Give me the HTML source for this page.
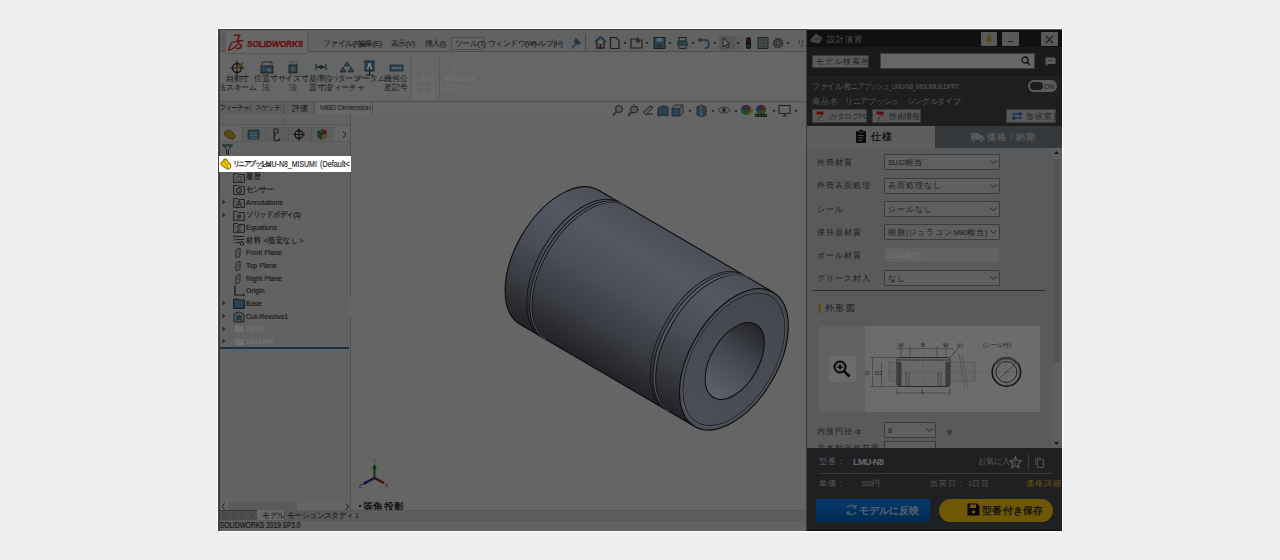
<!DOCTYPE html>
<html><head><meta charset="utf-8"><style>
*{box-sizing:border-box;margin:0;padding:0}
html,body{width:1280px;height:560px;overflow:hidden;background:#efefef;font-family:"Liberation Sans",sans-serif;}
.a{position:absolute}
.t{position:absolute;white-space:nowrap;line-height:1;}
.j{letter-spacing:0.14em}
.j0 .j{letter-spacing:0}
svg{position:absolute;overflow:visible}
</style></head><body>
<div class="a" style="left:217px;top:28px;width:846px;height:504px;background:#ffffff;"></div>
<div class="a" style="left:218px;top:29px;width:588px;height:502px;background:#666666;"></div>
<div class="a" style="left:218px;top:29px;width:844px;height:1px;background:#3a3a3a;"></div>
<div class="a" style="left:218px;top:29px;width:1px;height:502px;background:#4a4a4a;"></div>
<div class="a" style="left:219px;top:30px;width:587px;height:22px;background:#626262;"></div>
<div class="a" style="left:219px;top:51px;width:587px;height:1px;background:#4c4c4c;"></div>
<div class="a" style="left:225px;top:31px;width:83px;height:23px;background:#686868;border:1px solid #575757;border-top:none;border-radius:0 0 2px 2px"></div>
<div class="a" style="left:220px;top:34px;width:5px;height:17px;background:#5c5c5c;"></div>
<div class="t" style="left:246.5px;top:40.2px;font-size:8.9px;color:#640e0e;font-weight:bold;font-style:italic;letter-spacing:0px;-webkit-text-stroke:0.35px #640e0e;transform:scaleX(0.92);transform-origin:left">SOLIDWORKS</div>
<svg style="left:224px;top:32px" width="24" height="22" viewBox="0 0 24 22"><path d="M10 3.3 H15.8 L13.2 9" fill="none" stroke="#640e0e" stroke-width="1.5"/><path d="M13.5 9.6 C10 9.6 7.8 10 7.2 11.5 L4.6 18 C9 17.2 12 15 13.2 12.2" fill="none" stroke="#640e0e" stroke-width="1.3"/><path d="M19.5 8.8 H15.5 C13.5 8.8 13.8 11.8 16.3 12.8 C18.5 13.8 17.5 16.3 14.5 16.4 H12.3" fill="none" stroke="#640e0e" stroke-width="1.5"/></svg>
<div class="a" style="left:451px;top:37px;width:33px;height:13px;background:#656565;border:1px solid #4e4e4e;"></div>
<div class="t j0" style="left:323px;top:40px;font-size:8px;color:#161616;letter-spacing:-0.6px">ファイル(F)</div>
<div class="t j0" style="left:358px;top:40px;font-size:8px;color:#161616;letter-spacing:-0.6px">編集(E)</div>
<div class="t j0" style="left:391px;top:40px;font-size:8px;color:#161616;letter-spacing:-0.6px">表示(V)</div>
<div class="t j0" style="left:425px;top:40px;font-size:8px;color:#161616;letter-spacing:-0.6px">挿入(I)</div>
<div class="t j0" style="left:455px;top:40px;font-size:8px;color:#161616;letter-spacing:-0.6px">ツール(T)</div>
<div class="t j0" style="left:488px;top:40px;font-size:8px;color:#161616;letter-spacing:-0.6px">ウィンドウ(W)</div>
<div class="t j0" style="left:531px;top:40px;font-size:8px;color:#161616;letter-spacing:-0.6px">ヘルプ(H)</div>
<svg style="left:571px;top:37px" width="10" height="12" viewBox="0 0 10 12"><path d="M1 11 L4.5 7 M3 4 L7 8 M5 2 L9 6 L7 7 L4 4 Z" stroke="#203848" stroke-width="1.6" fill="#203848"/></svg>
<div class="a" style="left:585px;top:34px;width:1px;height:17px;background:#4a4a4a;"></div>
<svg style="left:594px;top:36px" width="212" height="14" viewBox="0 0 212 14">
<path d="M1 6 L6.5 1 L12 6" fill="none" stroke="#1c3444" stroke-width="2"/>
<path d="M3 6 V12 H10 V6" fill="none" stroke="#1e1e1e" stroke-width="1.3"/>
<rect x="5.5" y="8" width="2" height="4" fill="#1e1e1e"/>
<path d="M16.5 1.5 H22 L25 4.5 V12.5 H16.5 Z" fill="none" stroke="#1e1e1e" stroke-width="1.2"/>
<path d="M29.5 6.3 L32.5 6.3 L31.0 8.3 Z" fill="#111"/>
<path d="M37 3 H42 L43 4 H48 V12 H37 Z" fill="none" stroke="#1e1e1e" stroke-width="1.2"/>
<path d="M44 1 V6 M42 4 L44 6.5 L46 4" fill="none" stroke="#1d3a14" stroke-width="1.5"/>
<path d="M51.5 6.3 L54.5 6.3 L53.0 8.3 Z" fill="#111"/>
<rect x="60" y="1.5" width="11" height="11" fill="#2a4454" stroke="#111" stroke-width="0.8"/>
<rect x="62.5" y="2" width="6" height="3.5" fill="#5a6a72"/>
<rect x="62.5" y="8" width="6" height="4" fill="#333"/>
<path d="M74.5 6.3 L77.5 6.3 L76.0 8.3 Z" fill="#111"/>
<rect x="83" y="5" width="11" height="5" fill="#2a4454"/>
<rect x="85" y="1.5" width="7" height="3.5" fill="none" stroke="#1e1e1e" stroke-width="1"/>
<rect x="85" y="9" width="7" height="3.5" fill="#5a5a5a" stroke="#1e1e1e" stroke-width="0.8"/>
<path d="M97.5 6.3 L100.5 6.3 L99.0 8.3 Z" fill="#111"/>
<path d="M106 4 H111 C114 4 115 6 115 8 C115 10 114 12 111 12" fill="none" stroke="#243e4c" stroke-width="2"/>
<path d="M103 4 L107 1 L107 7 Z" fill="#243e4c"/>
<path d="M119.5 6.3 L122.5 6.3 L121.0 8.3 Z" fill="#111"/>
<rect x="125" y="0" width="16" height="14" fill="#565656"/>
<rect x="141" y="0" width="7" height="14" fill="#5e5e5e"/>
<path d="M129 2 L129 11 L131.5 9 L133.5 12 L135 11 L133 8 L136 8 Z" fill="#6a6a6a" stroke="#1e1e1e" stroke-width="0.9"/>
<path d="M142.5 6.3 L145.5 6.3 L144.0 8.3 Z" fill="#111"/>
<rect x="152" y="1" width="5" height="12" rx="2.5" fill="#151515"/>
<circle cx="154.5" cy="4" r="1.3" fill="#5a0d0d"/><circle cx="154.5" cy="10" r="1.3" fill="#244a24"/>
<rect x="164" y="1.5" width="10" height="11" fill="#4a4a4a" stroke="#1e1e1e" stroke-width="0.9"/>
<path d="M166 4 H172 M166 7 H172 M166 10 H172" stroke="#243c48" stroke-width="1.2"/>
<circle cx="184" cy="7" r="4.6" fill="none" stroke="#222" stroke-width="1.3" stroke-dasharray="1.4 0.9"/><circle cx="184" cy="7" r="3.6" fill="none" stroke="#222" stroke-width="0.9"/>
<circle cx="184" cy="7" r="2" fill="none" stroke="#222" stroke-width="1"/>
<path d="M192.5 6.3 L195.5 6.3 L194.0 8.3 Z" fill="#111"/>
</svg>
<div class="t j0" style="left:797px;top:40px;font-size:8px;color:#161616;letter-spacing:-0.5px">リニ</div>
<div class="a" style="left:219px;top:101px;width:587px;height:1px;background:#505050;"></div>
<div class="t j0" style="left:197.5px;top:75.3px;width:80px;text-align:center;font-size:7.6px;color:#161616;letter-spacing:-0.3px">自動寸</div>
<div class="t j0" style="left:197.5px;top:83.8px;width:80px;text-align:center;font-size:7.6px;color:#161616;letter-spacing:-0.3px">法スキーム</div>
<div class="t j0" style="left:225.7px;top:75.3px;width:80px;text-align:center;font-size:7.6px;color:#161616;letter-spacing:-0.3px">位置寸</div>
<div class="t j0" style="left:225.7px;top:83.8px;width:80px;text-align:center;font-size:7.6px;color:#161616;letter-spacing:-0.3px">法</div>
<div class="t j0" style="left:253px;top:75.3px;width:80px;text-align:center;font-size:7.6px;color:#161616;letter-spacing:-0.3px">サイズ寸</div>
<div class="t j0" style="left:253px;top:83.8px;width:80px;text-align:center;font-size:7.6px;color:#161616;letter-spacing:-0.3px">法</div>
<div class="t j0" style="left:280.5px;top:75.3px;width:80px;text-align:center;font-size:7.6px;color:#161616;letter-spacing:-0.3px">基準位</div>
<div class="t j0" style="left:280.5px;top:83.8px;width:80px;text-align:center;font-size:7.6px;color:#161616;letter-spacing:-0.3px">置寸法</div>
<div class="t j0" style="left:305.3px;top:75.3px;width:80px;text-align:center;font-size:7.6px;color:#161616;letter-spacing:-0.3px">パターン</div>
<div class="t j0" style="left:305.3px;top:83.8px;width:80px;text-align:center;font-size:7.6px;color:#161616;letter-spacing:-0.3px">フィーチャ</div>
<div class="t j0" style="left:330px;top:75.3px;width:80px;text-align:center;font-size:7.6px;color:#161616;letter-spacing:-0.3px">データム</div>
<div class="t j0" style="left:356px;top:75.3px;width:80px;text-align:center;font-size:7.6px;color:#161616;letter-spacing:-0.3px">幾何公</div>
<div class="t j0" style="left:356px;top:83.8px;width:80px;text-align:center;font-size:7.6px;color:#161616;letter-spacing:-0.3px">差記号</div>
<div class="t j0" style="left:384px;top:75.3px;width:80px;text-align:center;font-size:7.6px;color:#747474;letter-spacing:-0.3px">公差の</div>
<div class="t j0" style="left:384px;top:83.8px;width:80px;text-align:center;font-size:7.6px;color:#747474;letter-spacing:-0.3px">ステータス</div>
<div class="t j0" style="left:384px;top:92.3px;width:80px;text-align:center;font-size:7.6px;color:#747474;letter-spacing:-0.3px">を表示</div>
<div class="t j0" style="left:419px;top:75.3px;width:80px;text-align:center;font-size:7.6px;color:#747474;letter-spacing:-0.3px">TolAnalyst</div>
<div class="t j0" style="left:419px;top:83.8px;width:80px;text-align:center;font-size:7.6px;color:#747474;letter-spacing:-0.3px">スタディ</div>
<div class="a" style="left:410px;top:56px;width:1px;height:43px;background:#5a5a5a;"></div>
<div class="a" style="left:439px;top:56px;width:1px;height:43px;background:#5a5a5a;"></div>
<svg style="left:226px;top:60px" width="260" height="16" viewBox="0 0 260 16">
<circle cx="11" cy="8" r="4.5" fill="none" stroke="#161616" stroke-width="1.4"/>
<path d="M11 1 V15 M4 8 H18" stroke="#161616" stroke-width="1.2"/>
<path d="M10 9 L16 2 L18 3 L12 10 Z" fill="#5e3e16"/>
<rect x="35" y="6" width="12" height="7" fill="#2a4454" stroke="#151515" stroke-width="0.8"/>
<path d="M36 5 V2 H46 V5" fill="none" stroke="#222" stroke-width="0.9"/>
<circle cx="43" cy="10" r="1.8" fill="#5a5a5a"/>
<rect x="63" y="5" width="8" height="8" fill="#2a4454" stroke="#151515" stroke-width="0.8"/>
<circle cx="67" cy="9" r="1.8" fill="#5a5a5a"/>
<path d="M64 2 H72" stroke="#222" stroke-width="0.9" stroke-dasharray="1 1"/>
<rect x="89" y="4" width="2" height="6" fill="#2a4454"/><rect x="99" y="4" width="2" height="6" fill="#2a4454"/>
<path d="M91 7 H99" stroke="#151515" stroke-width="1.2"/><circle cx="95" cy="7" r="1.5" fill="none" stroke="#151515"/>
<path d="M121 2 L118 6 H124 Z M117 7 L114 12 H120 Z M125 7 L122 12 H128 Z" fill="#2a4454" stroke="#151515" stroke-width="0.6"/>
<rect x="139" y="1" width="9" height="10" fill="#2a4454" stroke="#151515" stroke-width="0.8"/>
<path d="M141.5 9 L143.5 3 L145.5 9" fill="none" stroke="#bbb" stroke-width="0.8"/>
<path d="M143.5 11 V15 M140 15 H147" stroke="#151515" stroke-width="1"/>
<rect x="164" y="5" width="13" height="6" fill="#2a4454" stroke="#151515" stroke-width="0.6"/>
<path d="M166 8 H175" stroke="#8a9aa2" stroke-width="1" stroke-dasharray="1.5 1"/>
<path d="M193 2 V7 M190.5 4.5 H195.5 M190.5 8.5 H195.5" stroke="#6e6e6e" stroke-width="1"/>
<circle cx="198" cy="10" r="2.2" fill="none" stroke="#6e6e6e" stroke-width="0.8"/>
<rect x="228" y="1" width="8" height="11" fill="none" stroke="#6e6e6e" stroke-width="0.9"/>
<path d="M230 3 V10 M233 3 L231 6.5 L233 10" stroke="#6e6e6e" stroke-width="0.9" fill="none"/>
</svg>
<div class="a" style="left:219px;top:102px;width:587px;height:12px;background:#666666;"></div>
<div class="a" style="left:219px;top:101px;width:32px;height:14px;background:#5e5e5e;border-top:1px solid #525252;border-right:1px solid #4e4e4e;border-bottom:1px solid #555"></div>
<div class="t j0" style="left:219px;top:105px;width:32px;text-align:center;font-size:6.6px;color:#141414;letter-spacing:-0.9px">フィーチャー</div>
<div class="a" style="left:251px;top:101px;width:33px;height:14px;background:#5e5e5e;border-top:1px solid #525252;border-right:1px solid #4e4e4e;border-bottom:1px solid #555"></div>
<div class="t j0" style="left:251px;top:105px;width:33px;text-align:center;font-size:6.6px;color:#141414;letter-spacing:-0.9px">スケッチ</div>
<div class="a" style="left:284px;top:101px;width:31px;height:14px;background:#5e5e5e;border-top:1px solid #525252;border-right:1px solid #4e4e4e;border-bottom:1px solid #555"></div>
<div class="t j0" style="left:284px;top:105px;width:31px;text-align:center;font-size:8px;color:#141414;letter-spacing:0px">評価</div>
<div class="a" style="left:315px;top:101px;width:58px;height:14px;background:#686868;border-top:1px solid #525252;border-right:1px solid #4e4e4e;"></div>
<div class="t" style="left:320px;top:104.2px;font-size:7.8px;color:#1e1e1e;letter-spacing:-0.45px">MBD Dimension</div>
<div class="a" style="left:219px;top:114px;width:131px;height:396px;background:#626262;"></div>
<div class="a" style="left:219px;top:114px;width:131px;height:11px;background:#636363;border-bottom:1px solid #575757"></div>
<svg style="left:281px;top:117.5px" width="6" height="6" viewBox="0 0 6 6"><path d="M3 0.5 L5.5 3 L3 5.5 L0.5 3 Z" fill="none" stroke="#4a4a4a" stroke-width="0.8"/></svg>
<div class="a" style="left:219px;top:127px;width:131px;height:15px;background:#666666;"></div>
<div class="a" style="left:242px;top:127px;width:23px;height:15px;background:#5e5e5e;border-left:1px solid #555;border-top:1px solid #5a5a5a"></div>
<div class="a" style="left:265px;top:127px;width:23px;height:15px;background:#5e5e5e;border-left:1px solid #555;border-top:1px solid #5a5a5a"></div>
<div class="a" style="left:288px;top:127px;width:23px;height:15px;background:#5e5e5e;border-left:1px solid #555;border-top:1px solid #5a5a5a"></div>
<div class="a" style="left:311px;top:127px;width:23px;height:15px;background:#5e5e5e;border-left:1px solid #555;border-top:1px solid #5a5a5a"></div>
<div class="a" style="left:219px;top:141px;width:131px;height:1px;background:#5a5a5a;"></div>
<svg style="left:219px;top:127px" width="131" height="15" viewBox="0 0 131 15">
<path d="M7 4 C9 2 12 3 13 5 L15 7 C17 9 16 12 13 12 C10 12 7 10 6 8 C5 6 5.5 5 7 4Z" fill="#5e4a10" stroke="#2a2208" stroke-width="0.8"/>
<rect x="29" y="3" width="11" height="9" rx="1" fill="#2a4454" stroke="#1a1a1a" stroke-width="0.6"/>
<path d="M31 6 H38 M31 8.5 H38 M31 11 H38" stroke="#5a6a70" stroke-width="0.8"/>
<path d="M55 2 V13 M55 2 H59 V6 H55 M57 8 A3 3 0 1 0 61 11" fill="none" stroke="#1e1e1e" stroke-width="1.1"/>
<circle cx="80" cy="7.5" r="4" fill="none" stroke="#121212" stroke-width="1.4"/>
<path d="M80 1.5 V13.5 M74 7.5 H86" stroke="#121212" stroke-width="1.2"/>
<circle cx="103" cy="7.5" r="5" fill="#244a24"/>
<path d="M103 7.5 L103 2.5 A5 5 0 0 1 108 7.5 Z" fill="#5a1c1c"/>
<path d="M103 7.5 L108 7.5 A5 5 0 0 1 103 12.5 Z" fill="#5e5416"/>
<path d="M103 7.5 L103 12.5 A5 5 0 0 1 98 7.5 Z" fill="#1e2e56"/>
<path d="M103 7.5 L98 4 M103 7.5 L107 3" stroke="#111" stroke-width="1"/>
<path d="M124 4 L127 7.5 L124 11" fill="none" stroke="#1a1a1a" stroke-width="1"/>
</svg>
<svg style="left:222px;top:144px" width="11" height="11" viewBox="0 0 11 11"><path d="M0.5 1 H10.5 L6.5 5.5 V10.5 L4.5 9.5 V5.5 Z" fill="none" stroke="#1a1a1a" stroke-width="1"/><path d="M0.5 1 H10.5 L9 2.7 H2 Z" fill="#243e4c"/></svg>
<div class="a" style="left:350px;top:114px;width:1px;height:396px;background:#505050;"></div>
<svg style="left:233px;top:171.5px" width="12" height="11" viewBox="0 0 12 11"><path d="M0.6 1.5 H4.5 L5.5 2.5 H11.4 V10.4 H0.6 Z" fill="#5e5e5e" stroke="#1c1c1c" stroke-width="0.9"/><circle cx="6" cy="6.5" r="2.5" fill="none" stroke="#243c48" stroke-width="1"/></svg>
<div class="t" style="left:246px;top:173.3px;font-size:8.1px;color:#161616;letter-spacing:0px;transform:scaleX(0.86);transform-origin:left;-webkit-text-stroke:0.15px #161616"><span class="j">履歴</span></div>
<svg style="left:233px;top:184.1px" width="12" height="11" viewBox="0 0 12 11"><path d="M0.6 1.5 H4.5 L5.5 2.5 H11.4 V10.4 H0.6 Z" fill="#5e5e5e" stroke="#1c1c1c" stroke-width="0.9"/><circle cx="6" cy="6.5" r="2.5" fill="none" stroke="#1a1a1a" stroke-width="1"/><path d="M6 6.5 L8 8" stroke="#5a0d0d" stroke-width="1"/></svg>
<div class="t j0" style="left:246px;top:185.9px;font-size:8.1px;color:#161616;letter-spacing:-0.9px;transform:scaleX(0.95);transform-origin:left;-webkit-text-stroke:0.15px #161616">センサー</div>
<svg style="left:222px;top:199.2px" width="4" height="6" viewBox="0 0 4 6"><path d="M0.5 0.5 L3.5 3 L0.5 5.5 Z" fill="#2a2a2a"/></svg>
<svg style="left:233px;top:196.7px" width="12" height="11" viewBox="0 0 12 11"><path d="M0.6 1.5 H4.5 L5.5 2.5 H11.4 V10.4 H0.6 Z" fill="#5e5e5e" stroke="#1c1c1c" stroke-width="0.9"/><path d="M3.5 9.5 L6 3.5 L8.5 9.5 M4.5 7.5 H7.5" fill="none" stroke="#1a1a1a" stroke-width="0.9"/></svg>
<div class="t" style="left:246px;top:198.5px;font-size:8.1px;color:#161616;letter-spacing:0px;transform:scaleX(0.86);transform-origin:left;-webkit-text-stroke:0.15px #161616">Annotations</div>
<svg style="left:222px;top:212px" width="4" height="6" viewBox="0 0 4 6"><path d="M0.5 0.5 L3.5 3 L0.5 5.5 Z" fill="#2a2a2a"/></svg>
<svg style="left:233px;top:209.5px" width="12" height="11" viewBox="0 0 12 11"><path d="M0.6 1.5 H4.5 L5.5 2.5 H11.4 V10.4 H0.6 Z" fill="#5e5e5e" stroke="#1c1c1c" stroke-width="0.9"/><circle cx="6" cy="6.5" r="2.3" fill="#243c48"/></svg>
<div class="t j0" style="left:246px;top:211.3px;font-size:8.1px;color:#161616;letter-spacing:-0.9px;transform:scaleX(0.95);transform-origin:left;-webkit-text-stroke:0.15px #161616">ソリッドボディ(1)</div>
<svg style="left:233px;top:221.9px" width="12" height="11" viewBox="0 0 12 11"><path d="M0.6 1.5 H4.5 L5.5 2.5 H11.4 V10.4 H0.6 Z" fill="#5e5e5e" stroke="#1c1c1c" stroke-width="0.9"/><path d="M8 4 H4 L6 6.5 L4 9 H8" fill="none" stroke="#1a1a1a" stroke-width="0.9"/></svg>
<div class="t" style="left:246px;top:223.70000000000002px;font-size:8.1px;color:#161616;letter-spacing:0px;transform:scaleX(0.86);transform-origin:left;-webkit-text-stroke:0.15px #161616">Equations</div>
<svg style="left:233px;top:234.8px" width="12" height="11" viewBox="0 0 12 11"><path d="M3 1.5 H11 M3 4.5 H11 M3 7.5 H7" stroke="#1a1a1a" stroke-width="1"/><circle cx="1.5" cy="1.5" r="1" fill="none" stroke="#1a1a1a" stroke-width="0.7"/><circle cx="1.5" cy="4.5" r="1" fill="#243c48"/><circle cx="1.5" cy="7.5" r="1" fill="#5a4a0a"/><circle cx="9" cy="8.5" r="1.8" fill="none" stroke="#111" stroke-width="1"/></svg>
<div class="t" style="left:246px;top:236.60000000000002px;font-size:8.1px;color:#161616;letter-spacing:0px;transform:scaleX(0.86);transform-origin:left;-webkit-text-stroke:0.15px #161616"><span class="j">材料</span> &lt;<span class="j">指定なし</span>&gt;</div>
<svg style="left:233px;top:247.3px" width="12" height="12" viewBox="0 0 12 12"><path d="M3 3 L7 1 V9 L3 11 Z" fill="none" stroke="#1e1e1e" stroke-width="0.9"/><path d="M5 4 V8" stroke="#1e1e1e" stroke-width="0.8" stroke-dasharray="1 1"/></svg>
<div class="t" style="left:246px;top:249.10000000000002px;font-size:8.1px;color:#161616;letter-spacing:0px;transform:scaleX(0.86);transform-origin:left;-webkit-text-stroke:0.15px #161616">Front Plane</div>
<svg style="left:233px;top:260.1px" width="12" height="12" viewBox="0 0 12 12"><path d="M3 3 L7 1 V9 L3 11 Z" fill="none" stroke="#1e1e1e" stroke-width="0.9"/><path d="M5 4 V8" stroke="#1e1e1e" stroke-width="0.8" stroke-dasharray="1 1"/></svg>
<div class="t" style="left:246px;top:261.90000000000003px;font-size:8.1px;color:#161616;letter-spacing:0px;transform:scaleX(0.86);transform-origin:left;-webkit-text-stroke:0.15px #161616">Top Plane</div>
<svg style="left:233px;top:272.7px" width="12" height="12" viewBox="0 0 12 12"><path d="M3 3 L7 1 V9 L3 11 Z" fill="none" stroke="#1e1e1e" stroke-width="0.9"/><path d="M5 4 V8" stroke="#1e1e1e" stroke-width="0.8" stroke-dasharray="1 1"/></svg>
<div class="t" style="left:246px;top:274.5px;font-size:8.1px;color:#161616;letter-spacing:0px;transform:scaleX(0.86);transform-origin:left;-webkit-text-stroke:0.15px #161616">Right Plane</div>
<svg style="left:233px;top:285.2px" width="12" height="12" viewBox="0 0 12 12"><path d="M2 0.5 V10 H11" fill="none" stroke="#111" stroke-width="1.2"/><path d="M10 8.5 L12 10 L10 11.5 Z" fill="#111"/></svg>
<div class="t" style="left:246px;top:287.0px;font-size:8.1px;color:#161616;letter-spacing:0px;transform:scaleX(0.86);transform-origin:left;-webkit-text-stroke:0.15px #161616">Origin</div>
<svg style="left:222px;top:300.4px" width="4" height="6" viewBox="0 0 4 6"><path d="M0.5 0.5 L3.5 3 L0.5 5.5 Z" fill="#2a2a2a"/></svg>
<svg style="left:233px;top:297.9px" width="12" height="11" viewBox="0 0 12 11"><path d="M0.6 1 H4.5 L5.5 2 H11.4 V10.4 H0.6 Z" fill="#2a4454" stroke="#111" stroke-width="0.9"/></svg>
<div class="t" style="left:246px;top:299.7px;font-size:8.1px;color:#161616;letter-spacing:0px;transform:scaleX(0.86);transform-origin:left;-webkit-text-stroke:0.15px #161616">Base</div>
<svg style="left:222px;top:313.2px" width="4" height="6" viewBox="0 0 4 6"><path d="M0.5 0.5 L3.5 3 L0.5 5.5 Z" fill="#2a2a2a"/></svg>
<svg style="left:233px;top:310.7px" width="12" height="12" viewBox="0 0 12 12"><path d="M1 3 L6 1 L11 3 V11 H1 Z" fill="#5a5a5a" stroke="#1a1a1a" stroke-width="0.9"/><path d="M3 11 V5 L6 3.5 L9 5 V11 L6 8.5 Z" fill="#243c48"/></svg>
<div class="t" style="left:246px;top:312.5px;font-size:8.1px;color:#161616;letter-spacing:0px;transform:scaleX(0.86);transform-origin:left;-webkit-text-stroke:0.15px #161616">Cut-Revolve1</div>
<svg style="left:222px;top:325.6px" width="4" height="6" viewBox="0 0 4 6"><path d="M0.5 0.5 L3.5 3 L0.5 5.5 Z" fill="#2a2a2a"/></svg>
<svg style="left:233px;top:323.1px" width="12" height="11" viewBox="0 0 12 11"><path d="M0.6 1.5 H4.5 L5.5 2.5 H11.4 V10.4 H0.6 Z" fill="#6e6e6e" stroke="#5a5a5a" stroke-width="0.9"/></svg>
<div class="t" style="left:246px;top:324.90000000000003px;font-size:8.1px;color:#777777;letter-spacing:0px;transform:scaleX(0.86);transform-origin:left;-webkit-text-stroke:0.15px #777777">LMUT</div>
<svg style="left:222px;top:338.3px" width="4" height="6" viewBox="0 0 4 6"><path d="M0.5 0.5 L3.5 3 L0.5 5.5 Z" fill="#2a2a2a"/></svg>
<svg style="left:233px;top:335.8px" width="12" height="11" viewBox="0 0 12 11"><path d="M0.6 1.5 H4.5 L5.5 2.5 H11.4 V10.4 H0.6 Z" fill="#6e6e6e" stroke="#5a5a5a" stroke-width="0.9"/></svg>
<div class="t" style="left:246px;top:337.6px;font-size:8.1px;color:#777777;letter-spacing:0px;transform:scaleX(0.86);transform-origin:left;-webkit-text-stroke:0.15px #777777">LMU-MX</div>
<div class="a" style="left:219px;top:347px;width:130px;height:2px;background:#17354a;"></div>
<div class="a" style="left:350px;top:295px;width:7px;height:22px;background:#666666;border:1px solid #4e4e4e;border-left:none"></div>
<svg style="left:351px;top:303px" width="4" height="6" viewBox="0 0 4 6"><path d="M2 0.5 L3.5 3 L2 5.5 L0.5 3Z" fill="none" stroke="#4a4a4a" stroke-width="0.7"/></svg>
<div class="a" style="left:219px;top:502px;width:130px;height:8px;background:#666666;"></div>
<div class="a" style="left:228px;top:502px;width:69px;height:8px;background:#5a5a5a;"></div>
<svg style="left:221px;top:503px" width="130" height="7" viewBox="0 0 130 7"><path d="M3.5 0.5 L1 3.5 L3.5 6.5" fill="none" stroke="#111" stroke-width="1"/><path d="M125 0.5 L127.5 3.5 L125 6.5" fill="none" stroke="#111" stroke-width="1"/></svg>
<div class="a" style="left:351px;top:115px;width:455px;height:395px;background:#656565;"></div>
<svg style="left:612px;top:104px" width="190" height="13" viewBox="0 0 190 13">
<circle cx="7" cy="5" r="3.5" fill="#5a5a5a" stroke="#1e1e1e" stroke-width="1"/><path d="M4.5 7.5 L1 11.5" stroke="#243c48" stroke-width="2"/>
<circle cx="22" cy="5.5" r="3.5" fill="#5a5a5a" stroke="#1e1e1e" stroke-width="1"/><path d="M19.5 8 L16 12" stroke="#243c48" stroke-width="2"/><path d="M22 0 V1.5 M26.5 2 L25.5 3 M27 6 H25.5" stroke="#1e1e1e" stroke-width="0.8"/>
<path d="M31 8 L38 2 L41 3 L34 11 Z" fill="#5a5a5a" stroke="#1e1e1e" stroke-width="0.9"/><path d="M35 10 H41" stroke="#243c48" stroke-width="1.5"/>
<path d="M46 4 L51 2 V11 L46 12 Z" fill="#2a4454" stroke="#1e1e1e" stroke-width="0.8"/><path d="M51 2 L56 3 V12 L51 11" fill="#2a4454" stroke="#1e1e1e" stroke-width="0.8"/>
<path d="M60 4 H68 V12 H60 Z" fill="#2a4454" stroke="#1e1e1e" stroke-width="0.8"/><path d="M60 4 L63 1 H71 L68 4 M71 1 V9 L68 12" fill="#5e5e5e" stroke="#1e1e1e" stroke-width="0.8"/>
<path d="M76.5 6.3 L79.5 6.3 L78.0 8.3 Z" fill="#111"/>
<path d="M85 3 L89 1 L94 3 V11 L89 13 L85 11 Z" fill="#2a4454" stroke="#1e1e1e" stroke-width="0.8"/><path d="M89 1 V13" stroke="#6a6a6a" stroke-width="0.8"/>
<path d="M99.5 6.3 L102.5 6.3 L101.0 8.3 Z" fill="#111"/>
<path d="M106 6 C109 2 116 2 118 6 C116 10 109 10 106 6 Z" fill="none" stroke="#2a2a2a" stroke-width="0.9"/><circle cx="112" cy="6" r="2" fill="#2a2a2a"/>
<path d="M122.5 6.3 L125.5 6.3 L124.0 8.3 Z" fill="#111"/>
<circle cx="134" cy="6" r="5" fill="#244a24"/><path d="M134 6 L129 6 A5 5 0 0 1 134 1 Z" fill="#1e2e56"/><path d="M134 6 L134 1 A5 5 0 0 1 139 6 Z" fill="#5a1c1c"/><path d="M136 9 L141 5 L142 6 L137 11 Z" fill="#5e5416"/>
<circle cx="149" cy="6" r="5" fill="#244a24"/><path d="M149 6 L144 6 A5 5 0 0 1 149 1 Z" fill="#1e2e56"/><path d="M149 6 L149 1 A5 5 0 0 1 154 6 Z" fill="#5a1c1c"/><path d="M143 10 H155 V13 H143 Z" fill="#1a1a1a"/><path d="M144 11.5 H154" stroke="#555" stroke-dasharray="1.5 1.5"/>
<path d="M160.5 6.3 L163.5 6.3 L162.0 8.3 Z" fill="#111"/>
<rect x="167" y="1.5" width="11" height="8" fill="none" stroke="#1e1e1e" stroke-width="1"/><path d="M172.5 9.5 V12 M170 12 H175" stroke="#1e1e1e" stroke-width="1"/>
<path d="M182.5 6.3 L185.5 6.3 L184.0 8.3 Z" fill="#111"/>
</svg>
<svg style="left:358px;top:457px" width="34" height="32" viewBox="0 0 34 32">
<path d="M16.5 21 V9" stroke="#0e3210" stroke-width="1.8"/><path d="M14.2 11.5 L16.5 7 L18.8 11.5 Z" fill="#0e3210"/>
<path d="M16.5 21 L6 26.5" stroke="#0e1644" stroke-width="2.2"/><path d="M3.5 28 L8 23.8 L9.2 26.8 Z" fill="#0e1644"/>
<path d="M16.5 21 L26 26" stroke="#420c0c" stroke-width="2.2"/>
<text x="14.5" y="6" font-size="6" fill="#244a24" font-family="Liberation Sans">Y</text>
<text x="0.5" y="31" font-size="6" fill="#1a1f5a" font-family="Liberation Sans">Z</text>
<text x="26.5" y="30" font-size="6" fill="#5a1010" font-family="Liberation Sans">X</text>
</svg>
<div class="a" style="left:359px;top:505px;width:2px;height:2px;background:#111;"></div>
<div class="t j0" style="left:362.5px;top:501.5px;font-size:10px;color:#141414;font-weight:bold;letter-spacing:0.6px">等角投影</div>
<div class="a" style="left:219px;top:510px;width:587px;height:10px;background:#5e5e5e;border-top:1px solid #555"></div>
<div class="a" style="left:219px;top:510px;width:38px;height:10px;background:#4e4e4e;border-top:1px solid #333"></div>
<svg style="left:221px;top:511px" width="34" height="9" viewBox="0 0 34 9"><path d="M2 1.5 V7.5 M6 1.5 L3 4.5 L6 7.5 M14 1.5 L11 4.5 L14 7.5 M20 1.5 L23 4.5 L20 7.5 M28 1.5 L31 4.5 L28 7.5 M32 1.5 V7.5" fill="none" stroke="#404040" stroke-width="1"/></svg>
<div class="a" style="left:257px;top:510px;width:27px;height:10px;background:#686868;"></div>
<div class="t j0" style="left:262px;top:512px;font-size:7.5px;color:#141414;letter-spacing:-0.3px">モデル</div>
<div class="a" style="left:284px;top:510px;width:58px;height:10px;background:#5a5a5a;border-left:1px solid #4a4a4a;border-right:1px solid #4a4a4a"></div>
<div class="t j0" style="left:287px;top:512px;font-size:7.5px;color:#141414;letter-spacing:-0.6px">モーションスタディ 1</div>
<div class="a" style="left:219px;top:520px;width:587px;height:11px;background:#616161;border-top:1px solid #585858"></div>
<div class="t" style="left:219.5px;top:522.2px;font-size:8.2px;color:#121212;letter-spacing:0px;transform:scaleX(0.8);transform-origin:left;-webkit-text-stroke:0.15px #121212">SOLIDWORKS 2019 SP3.0</div>
<svg style="left:0;top:0" width="1280" height="560" viewBox="0 0 1280 560"><defs>
<linearGradient id="bodyg" x1="0" y1="-1" x2="0" y2="1" gradientUnits="objectBoundingBox">
</linearGradient>
<linearGradient id="bg2" gradientUnits="userSpaceOnUse" x1="0" y1="-78" x2="0" y2="78">
<stop offset="0" stop-color="#4c4e58"/><stop offset="0.22" stop-color="#555762"/><stop offset="0.5" stop-color="#4b4d57"/><stop offset="0.75" stop-color="#3a3c43"/><stop offset="0.9" stop-color="#2b2c31"/><stop offset="1" stop-color="#222327"/>
</linearGradient>
<linearGradient id="faceg" gradientUnits="userSpaceOnUse" x1="0" y1="-78" x2="0" y2="78">
<stop offset="0" stop-color="#45474f"/><stop offset="1" stop-color="#4c4e57"/>
</linearGradient>
<linearGradient id="holeg" gradientUnits="userSpaceOnUse" x1="205" y1="-40" x2="196" y2="40">
<stop offset="0" stop-color="#25262b"/><stop offset="0.45" stop-color="#454750"/><stop offset="1" stop-color="#5d5f6a"/>
</linearGradient>
</defs><g transform="translate(559.5,257.4) rotate(30.3)"><path d="M0 -77.7 A43.66740000000001 77.7 0 0 0 0 77.7 L202 77.7 L202 -77.7 Z" fill="url(#bg2)" stroke="#0c0c0e" stroke-width="1.1"/><path d="M25.00 -77.70 A43.67 77.70 0 0 0 25.00 77.70" fill="none" stroke="#141417" stroke-width="0.9"/><path d="M28.50 -77.70 A43.67 77.70 0 0 0 28.50 77.70" fill="none" stroke="#141417" stroke-width="0.9"/><path d="M31.00 -77.70 A43.67 77.70 0 0 0 31.00 77.70" fill="none" stroke="#141417" stroke-width="0.9"/><path d="M29.75 -77.70 A43.67 77.70 0 0 0 29.75 77.70" fill="none" stroke="#6a6c76" stroke-width="0.6"/><path d="M168.00 -77.70 A43.67 77.70 0 0 0 168.00 77.70" fill="none" stroke="#141417" stroke-width="0.9"/><path d="M171.00 -77.70 A43.67 77.70 0 0 0 171.00 77.70" fill="none" stroke="#141417" stroke-width="0.9"/><path d="M174.50 -77.70 A43.67 77.70 0 0 0 174.50 77.70" fill="none" stroke="#141417" stroke-width="0.9"/><path d="M172.75 -77.70 A43.67 77.70 0 0 0 172.75 77.70" fill="none" stroke="#6a6c76" stroke-width="0.6"/><ellipse cx="202" cy="0" rx="43.66740000000001" ry="77.7" fill="url(#faceg)" stroke="#0c0c0e" stroke-width="1.1"/><ellipse cx="202" cy="0" rx="41.05" ry="73.04" fill="none" stroke="#16171a" stroke-width="0.8"/><ellipse cx="202" cy="0" rx="41.70" ry="74.20" fill="none" stroke="#5e606a" stroke-width="0.5"/><ellipse cx="203.5" cy="1" rx="23.77" ry="42.3" fill="url(#holeg)" stroke="#0c0c0e" stroke-width="1"/></g></svg>
<div class="a" style="left:806px;top:29px;width:256px;height:502px;background:#595a5c;"></div>
<div class="a" style="left:806px;top:29px;width:1px;height:502px;background:#3a3a3a;"></div>
<div class="a" style="left:807px;top:30px;width:255px;height:17px;background:#101010;"></div>
<svg style="left:809px;top:33px" width="14" height="11" viewBox="0 0 14 11"><path d="M1 8 L7 1 L13 5 L10 10 Z" fill="#444" stroke="#555" stroke-width="0.8"/><path d="M1 8 L8 6 L13 5" fill="none" stroke="#222" stroke-width="0.7"/></svg>
<div class="t" style="left:827px;top:35.5px;font-size:8px;color:#565656;letter-spacing:-0.2px"><span class="j">設計演習</span></div>
<div class="a" style="left:981px;top:32px;width:16px;height:14px;background:#595959;border-radius:1px"></div>
<svg style="left:984px;top:34px" width="10" height="10" viewBox="0 0 10 10"><path d="M3 0.5 H7 L6.5 4 L8.5 7 H1.5 L3.5 4 Z" fill="#5e4a08"/><path d="M5 7 V10" stroke="#5e4a08" stroke-width="1"/></svg>
<div class="a" style="left:1002px;top:32px;width:17px;height:14px;background:#595959;border-radius:1px"></div>
<div class="a" style="left:1008px;top:41px;width:5px;height:1px;background:#202020;"></div>
<div class="a" style="left:1041px;top:32px;width:17px;height:14px;background:#595959;border-radius:1px"></div>
<svg style="left:1045px;top:35px" width="9" height="9" viewBox="0 0 9 9"><path d="M1 1 L8 8 M8 1 L1 8" stroke="#1e1e1e" stroke-width="1.1"/></svg>
<div class="a" style="left:807px;top:47px;width:255px;height:27px;background:#1a1a1b;"></div>
<div class="a" style="left:807px;top:74px;width:255px;height:1px;background:#141414;"></div>
<div class="a" style="left:812px;top:55px;width:57px;height:13px;background:#5a5a5a;border:1px solid #3a3a3a"></div>
<div class="t" style="left:816px;top:58px;font-size:7.5px;color:#1e1e1e;letter-spacing:-0.2px"><span class="j">モデル検索画面</span></div>
<div class="a" style="left:880px;top:53px;width:155px;height:16px;background:#666666;border:1px solid #3a3a3a"></div>
<svg style="left:1021px;top:56px" width="10" height="10" viewBox="0 0 10 10"><circle cx="4" cy="4" r="3" fill="none" stroke="#111" stroke-width="1.3"/><path d="M6.2 6.2 L9 9" stroke="#111" stroke-width="1.6"/></svg>
<svg style="left:1045px;top:57px" width="11" height="10" viewBox="0 0 11 10"><path d="M0.5 0.5 H10.5 V7 H3 L1 9.5 V7 H0.5 Z" fill="#5a5a5a"/><path d="M3 3.5 H8" stroke="#333" stroke-width="0.8"/></svg>
<div class="a" style="left:807px;top:75px;width:255px;height:51px;background:#1e1e1f;"></div>
<div class="t j0" style="left:812px;top:83px;font-size:7.5px;color:#5a5a5a;letter-spacing:-0.3px">ファイル名</div>
<div class="t j0" style="left:845px;top:83px;font-size:7.5px;color:#5a5a5a;letter-spacing:-0.6px;transform:scaleX(0.85);transform-origin:left">リニアブッシュ_LMU-N8_MISUMI.SLDPRT</div>
<div class="t" style="left:812px;top:97.5px;font-size:7.5px;color:#5a5a5a;letter-spacing:-0.3px"><span class="j">商品名</span></div>
<div class="t j0" style="left:845px;top:97.5px;font-size:7.5px;color:#5a5a5a;letter-spacing:-0.3px">リニアブッシュ　シングルタイプ</div>
<div class="a" style="left:1028px;top:80px;width:29px;height:12px;background:#5c5c5c;border-radius:6px"></div>
<div class="a" style="left:1030px;top:82px;width:13px;height:8px;background:#1c1c1c;border-radius:4px"></div>
<div class="t" style="left:1044px;top:82.5px;font-size:7px;color:#1e1e1e;letter-spacing:-0.2px">ON</div>
<div class="a" style="left:812px;top:109px;width:55px;height:14px;background:#585858;border:1px solid #3a3a3a"></div>
<svg style="left:816px;top:111px" width="8" height="10" viewBox="0 0 8 10"><rect x="0.5" y="0.5" width="7" height="3" fill="#5a0c0c"/><path d="M2 9 C3 6 5 5 7 4" fill="none" stroke="#5a0c0c" stroke-width="0.8"/><path d="M0.5 9.5 H7.5" stroke="#444" stroke-width="0.6"/></svg>
<div class="t j0" style="left:829px;top:112.5px;font-size:7.5px;color:#252525;letter-spacing:-0.5px">カタログPDF</div>
<div class="a" style="left:872px;top:109px;width:49px;height:14px;background:#585858;border:1px solid #3a3a3a"></div>
<svg style="left:876px;top:111px" width="8" height="10" viewBox="0 0 8 10"><rect x="0.5" y="0.5" width="7" height="3" fill="#5a0c0c"/><path d="M2 9 C3 6 5 5 7 4" fill="none" stroke="#5a0c0c" stroke-width="0.8"/><path d="M0.5 9.5 H7.5" stroke="#444" stroke-width="0.6"/></svg>
<div class="t j0" style="left:889px;top:112.5px;font-size:7.5px;color:#252525;letter-spacing:-0.5px">技術情報</div>
<div class="a" style="left:1006px;top:109px;width:50px;height:14px;background:#585858;border:1px solid #3a3a3a"></div>
<svg style="left:1011px;top:111px" width="12" height="10" viewBox="0 0 12 10"><path d="M1 3 H10 M8 1 L10.5 3 L8 5 M11 7 H2 M4 5 L1.5 7 L4 9" fill="none" stroke="#12305a" stroke-width="1.3"/></svg>
<div class="t" style="left:1026px;top:112.5px;font-size:7.5px;color:#252525;letter-spacing:-0.3px"><span class="j">形状変更</span></div>
<div class="a" style="left:807px;top:126px;width:128px;height:22px;background:#5e5e5e;"></div>
<div class="a" style="left:935px;top:126px;width:127px;height:22px;background:#36393c;"></div>
<svg style="left:856px;top:129px" width="10" height="14" viewBox="0 0 10 14"><rect x="0" y="2" width="10" height="12" rx="1" fill="#0a0a0a"/><rect x="3" y="0.5" width="4" height="3" rx="0.5" fill="#0a0a0a" stroke="#5e5e5e" stroke-width="0.5"/><path d="M2.5 6.5 H7.5 M2.5 9 H7.5 M2.5 11.5 H6" stroke="#5e5e5e" stroke-width="0.8"/></svg>
<div class="t" style="left:871px;top:132px;font-size:9.5px;color:#161616;font-weight:bold;letter-spacing:0.5px"><span class="j">仕様</span></div>
<svg style="left:971px;top:132px" width="14" height="11" viewBox="0 0 14 11"><rect x="0" y="1" width="8" height="7" fill="#585858"/><path d="M8 3 H11 L13.5 6 V8 H8 Z" fill="#585858"/><circle cx="3" cy="9" r="1.6" fill="#585858" stroke="#36393c" stroke-width="0.8"/><circle cx="10.5" cy="9" r="1.6" fill="#585858" stroke="#36393c" stroke-width="0.8"/></svg>
<div class="t" style="left:987px;top:132.5px;font-size:9px;color:#585858;font-weight:bold;letter-spacing:0.3px"><span class="j">価格</span> / <span class="j">納期</span></div>
<div class="a" style="left:1052px;top:148px;width:9px;height:300px;background:#5e5e5e;"></div>
<div class="a" style="left:1053px;top:159px;width:7px;height:203px;background:#545454;"></div>
<svg style="left:1053px;top:150px" width="7" height="5" viewBox="0 0 7 5"><path d="M1 4 L3.5 1 L6 4 Z" fill="#151515"/></svg>
<svg style="left:1053px;top:441px" width="7" height="5" viewBox="0 0 7 5"><path d="M1 1 L3.5 4 L6 1 Z" fill="#151515"/></svg>
<div class="t" style="left:817px;top:159.3px;font-size:7.5px;color:#1a1a1a;letter-spacing:-0.3px"><span class="j">外筒材質</span></div>
<div class="a" style="left:884px;top:154.3px;width:116px;height:16px;background:#5f5f5f;border:1px solid #3c3c3c;border-radius:1px"></div>
<div class="t" style="left:888px;top:159.3px;font-size:7.5px;color:#1a1a1a;letter-spacing:-0.4px">SUJ2<span class="j">相当</span></div>
<svg style="left:990px;top:160.3px" width="7" height="4" viewBox="0 0 7 4"><path d="M0.5 0.5 L3.5 3.5 L6.5 0.5" fill="none" stroke="#1e1e1e" stroke-width="0.9"/></svg>
<div class="t" style="left:817px;top:182.45000000000002px;font-size:7.5px;color:#1a1a1a;letter-spacing:-0.3px"><span class="j">外筒表面処理</span></div>
<div class="a" style="left:884px;top:177.5px;width:116px;height:16px;background:#5f5f5f;border:1px solid #3c3c3c;border-radius:1px"></div>
<div class="t" style="left:888px;top:182.45000000000002px;font-size:7.5px;color:#1a1a1a;letter-spacing:-0.4px"><span class="j">表面処理なし</span></div>
<svg style="left:990px;top:183.5px" width="7" height="4" viewBox="0 0 7 4"><path d="M0.5 0.5 L3.5 3.5 L6.5 0.5" fill="none" stroke="#1e1e1e" stroke-width="0.9"/></svg>
<div class="t" style="left:817px;top:205.60000000000002px;font-size:7.5px;color:#1a1a1a;letter-spacing:-0.3px"><span class="j">シール</span></div>
<div class="a" style="left:884px;top:200.6px;width:116px;height:16px;background:#5f5f5f;border:1px solid #3c3c3c;border-radius:1px"></div>
<div class="t" style="left:888px;top:205.60000000000002px;font-size:7.5px;color:#1a1a1a;letter-spacing:-0.4px"><span class="j">シールなし</span></div>
<svg style="left:990px;top:206.6px" width="7" height="4" viewBox="0 0 7 4"><path d="M0.5 0.5 L3.5 3.5 L6.5 0.5" fill="none" stroke="#1e1e1e" stroke-width="0.9"/></svg>
<div class="t" style="left:817px;top:228.75px;font-size:7.5px;color:#1a1a1a;letter-spacing:-0.3px"><span class="j">保持器材質</span></div>
<div class="a" style="left:884px;top:223.8px;width:116px;height:16px;background:#5f5f5f;border:1px solid #3c3c3c;border-radius:1px"></div>
<div class="t" style="left:888px;top:228.75px;font-size:7.5px;color:#1a1a1a;letter-spacing:-0.4px"><span class="j">樹脂</span>(<span class="j">ジュラコン</span>M90<span class="j">相当</span>)</div>
<svg style="left:990px;top:229.8px" width="7" height="4" viewBox="0 0 7 4"><path d="M0.5 0.5 L3.5 3.5 L6.5 0.5" fill="none" stroke="#1e1e1e" stroke-width="0.9"/></svg>
<div class="t" style="left:817px;top:251.9px;font-size:7.5px;color:#1a1a1a;letter-spacing:-0.3px"><span class="j">ボール材質</span></div>
<div class="a" style="left:884px;top:246.9px;width:116px;height:16px;background:#626262;border:1px solid #5a5a5a"></div>
<div class="t" style="left:888px;top:251.9px;font-size:7.5px;color:#747474;letter-spacing:-0.4px">SUJ2<span class="j">相当</span></div>
<div class="t" style="left:817px;top:275.05px;font-size:7.5px;color:#1a1a1a;letter-spacing:-0.3px"><span class="j">グリース封入</span></div>
<div class="a" style="left:884px;top:270.1px;width:116px;height:16px;background:#5f5f5f;border:1px solid #3c3c3c;border-radius:1px"></div>
<div class="t" style="left:888px;top:275.05px;font-size:7.5px;color:#1a1a1a;letter-spacing:-0.4px"><span class="j">なし</span></div>
<svg style="left:990px;top:276.1px" width="7" height="4" viewBox="0 0 7 4"><path d="M0.5 0.5 L3.5 3.5 L6.5 0.5" fill="none" stroke="#1e1e1e" stroke-width="0.9"/></svg>
<div class="a" style="left:812px;top:289.5px;width:233px;height:1.5px;background:#2c2c2c;"></div>
<div class="a" style="left:818px;top:304px;width:3px;height:9px;background:#5e4c10;"></div>
<div class="t" style="left:825px;top:304px;font-size:9px;color:#1a1a1a;letter-spacing:0px"><span class="j">外形図</span></div>
<div class="a" style="left:819px;top:326px;width:221px;height:86px;background:#6c6c6c;"></div>
<div class="a" style="left:819px;top:326px;width:46px;height:86px;background:#616161;"></div>
<div class="a" style="left:829px;top:356px;width:27px;height:26px;background:#6b6b6b;border-radius:2px"></div>
<svg style="left:833px;top:360px" width="19" height="19" viewBox="0 0 19 19"><circle cx="7" cy="7" r="5.5" fill="none" stroke="#050505" stroke-width="2"/><path d="M11 11 L16.5 16.5" stroke="#050505" stroke-width="2.6"/><path d="M7 4.3 V9.7 M4.3 7 H9.7" stroke="#050505" stroke-width="1.6"/></svg>
<svg style="left:865px;top:326px" width="175" height="86" viewBox="0 0 175 86">
<g fill="none" stroke="#2c2c2c" stroke-width="0.7">
<rect x="24" y="36" width="86" height="19" fill="#686868" stroke="#555"/>
<rect x="32" y="31.5" width="53" height="29" rx="2.5" fill="#686868" stroke="#222" stroke-width="0.9"/>
<path d="M34 34 H83" stroke="#2a2a2a" stroke-width="1.4" stroke-dasharray="1.2 1"/>
<rect x="32.5" y="36" width="4" height="24" fill="#3a3a3a" stroke="none"/>
<rect x="80.5" y="36" width="4" height="24" fill="#3a3a3a" stroke="none"/>
<path d="M41 46 V60 M44 46 V60 M73 46 V60 M76 46 V60" stroke="#333"/>
<path d="M94 28 L100 62 M97 28 L103 62" stroke="#4e4e4e"/>
<path d="M7.5 31.5 V60.5 M16.5 36 V60.5 M5 31.5 H32 M5 60.5 H32" stroke="#3a3a3a" stroke-width="0.6"/>
<path d="M32 67 H85 M32 62 V69 M85 62 V69" stroke="#3a3a3a" stroke-width="0.6"/>
<path d="M36 20 V31 M45 20 V31 M72 20 V31 M81 20 V31 M30 22.6 H88" stroke="#3a3a3a" stroke-width="0.6"/>
<path d="M84 33 L95 20" stroke="#2a2a2a" stroke-width="0.7"/>
<path d="M4 46 H118 M58 24 V72" stroke="#525252" stroke-width="0.5" stroke-dasharray="4 1 1 1"/>
<path d="M121 46 H162 M141.4 26 V66" stroke="#555" stroke-width="0.5"/>
<circle cx="141.4" cy="46" r="14.2" stroke="#141414" stroke-width="1.6"/>
<circle cx="141.4" cy="46" r="10.5" stroke="#222" stroke-width="1"/>
<path d="M131 38 A12.5 12.5 0 0 1 152 38" stroke="#3e3e3e" stroke-width="2.6"/>
<path d="M134 53 L149 39" stroke="#1a2a4a" stroke-width="0.7"/>
</g>
<g font-family="Liberation Sans" font-size="6" fill="#1e1e1e">
<text x="33" y="21">W</text><text x="56" y="21">B</text><text x="78" y="21">W</text><text x="92" y="21">(r)</text>
<text x="118" y="21">(シール付)</text>
<text x="0" y="49">D</text><text x="10" y="49">D1</text><text x="56" y="67">L</text>
</g>
</svg>
<div class="t" style="left:817px;top:428px;font-size:7.5px;color:#1e1e1e;letter-spacing:-0.3px"><span class="j">内接円径</span> dr</div>
<div class="a" style="left:884px;top:422px;width:52px;height:16px;background:#5f5f5f;border:1px solid #3c3c3c;border-radius:1px"></div>
<div class="t" style="left:888px;top:427px;font-size:7.5px;color:#1a1a1a;">8</div>
<svg style="left:926px;top:428px" width="7" height="4" viewBox="0 0 7 4"><path d="M0.5 0.5 L3.5 3.5 L6.5 0.5" fill="none" stroke="#1e1e1e" stroke-width="0.9"/></svg>
<div class="t" style="left:947px;top:428px;font-size:7.5px;color:#1e1e1e;">φ</div>
<div class="a" style="left:884px;top:441px;width:52px;height:7px;background:#5f5f5f;border:1px solid #3c3c3c;border-bottom:none"></div>
<div class="t" style="left:817px;top:444.5px;font-size:7.5px;color:#1e1e1e;letter-spacing:-0.3px"><span class="j">基本動定格荷重</span></div>
<div class="a" style="left:807px;top:448px;width:255px;height:83px;background:#1f2022;"></div>
<div class="a" style="left:807px;top:530px;width:255px;height:1px;background:#0a0a0a;"></div>
<div class="t" style="left:819px;top:458px;font-size:8px;color:#5e5e5e;letter-spacing:-0.3px"><span class="j">型番：</span></div>
<div class="t" style="left:853px;top:457.5px;font-size:9px;color:#6a6a6a;font-weight:bold;letter-spacing:-0.6px">LMU-N8</div>
<div class="t j0" style="left:978px;top:458px;font-size:7.5px;color:#5e5e5e;letter-spacing:0px">お気に入り</div>
<svg style="left:1009px;top:456px" width="13" height="13" viewBox="0 0 13 13"><path d="M6.5 0.8 L8.2 4.6 L12.3 4.9 L9.2 7.6 L10.1 11.7 L6.5 9.6 L2.9 11.7 L3.8 7.6 L0.7 4.9 L4.8 4.6 Z" fill="none" stroke="#5e5e5e" stroke-width="1.1"/></svg>
<div class="a" style="left:1028px;top:453px;width:1px;height:17px;background:#3a3a3a;"></div>
<svg style="left:1035px;top:457px" width="9" height="11" viewBox="0 0 9 11"><rect x="2.5" y="2.5" width="6" height="8" rx="1" fill="none" stroke="#4e4e4e" stroke-width="1.2"/><path d="M0.8 8 V1 H6" fill="none" stroke="#4e4e4e" stroke-width="1"/></svg>
<div class="a" style="left:819px;top:473px;width:233px;height:1px;background:#3a3a3a;"></div>
<div class="t" style="left:819px;top:480px;font-size:7.5px;color:#585858;letter-spacing:-0.3px"><span class="j">単価：</span></div>
<div class="t" style="left:861px;top:480px;font-size:7.5px;color:#585858;letter-spacing:-0.4px">310<span class="j">円</span></div>
<div class="t" style="left:930px;top:480px;font-size:7.5px;color:#585858;letter-spacing:-0.3px"><span class="j">出荷日：</span></div>
<div class="t" style="left:968px;top:480px;font-size:7.5px;color:#585858;letter-spacing:-0.4px">1<span class="j">日目</span></div>
<div class="t" style="left:1026px;top:480px;font-size:7.5px;color:#6a5410;letter-spacing:-0.4px"><span class="j">価格詳細</span></div>
<div class="a" style="left:816px;top:499px;width:114px;height:23px;background:#03305c;background:linear-gradient(#053a6e,#022a52)"></div>
<svg style="left:845px;top:503px" width="13" height="14" viewBox="0 0 13 14"><path d="M10.5 4.5 A5 5 0 0 0 2 5 M2.5 9.5 A5 5 0 0 0 11 9" fill="none" stroke="#4a5a6a" stroke-width="1.5"/><path d="M11.5 1.5 V5.5 H7.5 Z M1.5 12.5 V8.5 H5.5 Z" fill="#4a5a6a"/></svg>
<div class="t j0" style="left:859px;top:505.5px;font-size:9.5px;color:#5a6470;font-weight:bold;letter-spacing:0px">モデルに反映</div>
<div class="a" style="left:939px;top:499px;width:114px;height:23px;background:#705a06;border-radius:11.5px;background:#6e5806"></div>
<svg style="left:967px;top:503px" width="13" height="13" viewBox="0 0 13 13"><path d="M0.5 0.5 H10 L12.5 3 V12.5 H0.5 Z" fill="#050505"/><rect x="3" y="1.5" width="6" height="3.5" fill="#6e5806"/><circle cx="6.5" cy="9" r="1.8" fill="#6e5806"/></svg>
<div class="t j0" style="left:982px;top:505.5px;font-size:9.5px;color:#141414;font-weight:bold;letter-spacing:0.3px">型番付き保存</div>
<div class="a" style="left:218px;top:29px;width:2px;height:502px;background:#3e3e3e;"></div>
<div class="a" style="left:219px;top:156px;width:132px;height:16px;background:#ffffff;"></div>
<svg style="left:219.5px;top:157.5px" width="12" height="12" viewBox="0 0 12 12"><path d="M4 1.2 L6.8 1.2 L7.6 3.6 L10.4 5.8 L11 9.2 L8.8 11.2 L6.2 10.6 L1.4 7.2 L0.8 4.6 L2.6 3.4 Z" fill="#f0c400" stroke="#7a5800" stroke-width="0.9" stroke-linejoin="round"/><path d="M3 4 L6.5 6.5 L7.5 10 M6.5 6.5 L10.2 6.2 M4.5 1.8 L5 4.2" fill="none" stroke="#9a7800" stroke-width="0.6"/><path d="M7.6 7.2 L9.6 7.5 L9.4 9.6" fill="none" stroke="#fff27a" stroke-width="0.7"/></svg>
<div class="a" style="left:219px;top:156px;width:132px;height:16px;overflow:hidden"><div class="t j0" style="left:14px;top:4.2px;font-size:7px;color:#1e1e1e;font-weight:bold;letter-spacing:-1.6px">リニアブッシュ</div><div class="t" style="left:39px;top:3.6px;font-size:8.3px;color:#1e1e1e;letter-spacing:0px;transform:scaleX(0.84);transform-origin:left;-webkit-text-stroke:0.15px #1e1e1e">_LMU-N8_MISUMI</div><div class="t" style="left:101px;top:3.6px;font-size:8.3px;color:#1e1e1e;letter-spacing:0px;transform:scaleX(0.88);transform-origin:left;-webkit-text-stroke:0.15px #1e1e1e">(Default&lt;</div></div>
</body></html>
